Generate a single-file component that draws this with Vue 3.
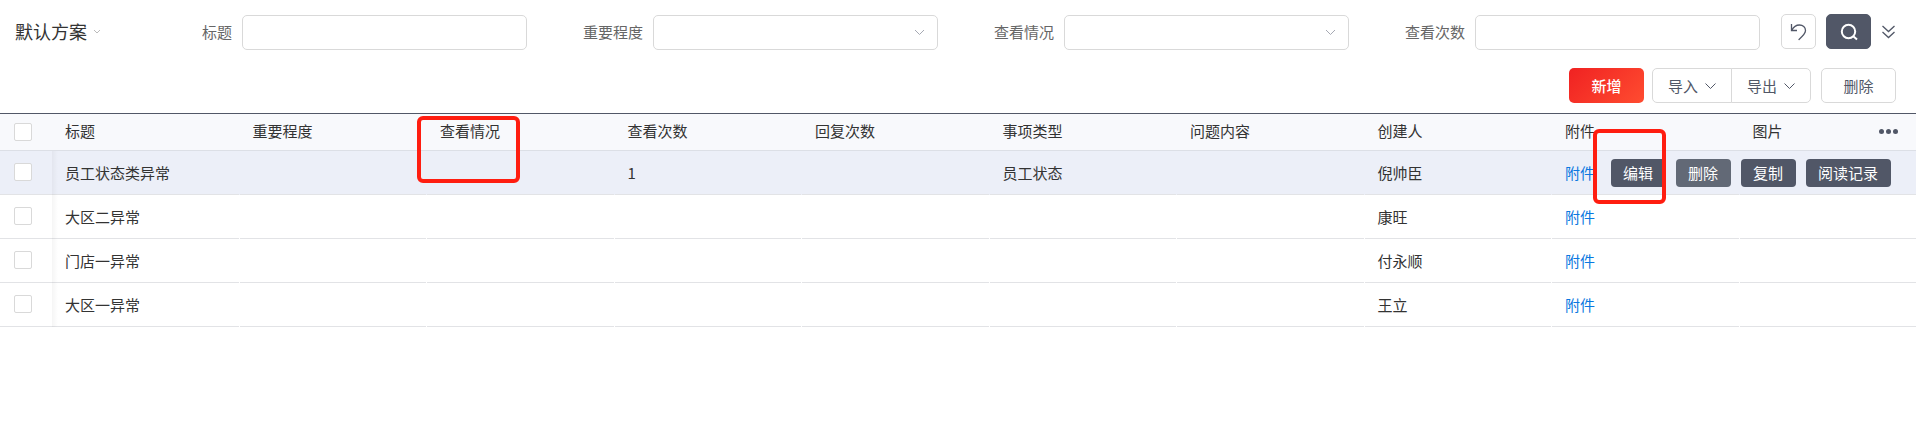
<script setup>
import { ref } from 'vue'

const filters = ref([
  { id: 'f-title', label: '标题', type: 'text', value: '' },
  { id: 'f-level', label: '重要程度', type: 'select', value: '' },
  { id: 'f-state', label: '查看情况', type: 'select', value: '' },
  { id: 'f-count', label: '查看次数', type: 'text', value: '' },
])

const columns = [
  { key: 'title', label: '标题' },
  { key: 'level', label: '重要程度' },
  { key: 'state', label: '查看情况', marked: true },
  { key: 'views', label: '查看次数' },
  { key: 'replies', label: '回复次数' },
  { key: 'kind', label: '事项类型' },
  { key: 'content', label: '问题内容' },
  { key: 'creator', label: '创建人' },
  { key: 'file', label: '附件' },
  { key: 'image', label: '图片' },
]

const rows = [
  { title: '员工状态类异常', views: '1', kind: '员工状态', creator: '倪帅臣', file: '附件', active: true },
  { title: '大区二异常', creator: '康旺', file: '附件' },
  { title: '门店一异常', creator: '付永顺', file: '附件' },
  { title: '大区一异常', creator: '王立', file: '附件' },
]
</script>

<template>
  <main class="page">
    <form class="filters" @submit.prevent>
      <button type="button" class="scheme">
        默认方案
        <svg width="8" height="6" viewBox="0 0 8 6"><path d="M1 1l3 3 3-3" /></svg>
      </button>
      <div v-for="f in filters" :key="f.id" class="field">
        <label :for="f.id">{{ f.label }}</label>
        <input v-if="f.type === 'text'" :id="f.id" v-model="f.value" type="text" class="control" />
        <div v-else class="select-wrap">
          <select :id="f.id" v-model="f.value" class="control"><option value=""></option></select>
          <svg width="11" height="7" viewBox="0 0 11 7"><path d="M1 1l4.5 4.5L10 1" /></svg>
        </div>
      </div>
      <div class="filter-actions">
        <button type="button" class="btn reset" aria-label="重置">
          <svg width="17" height="18" viewBox="0 0 17 18"><path d="M1.500 1v6.500h5.500M1.800 7.200C3.800 3.200 7 2 9.500 2c3.400 0 6 2.400 6 5.600 0 3.500-3.500 6.200-7 9.200" /></svg>
        </button>
        <button type="submit" class="btn search" aria-label="搜索">
          <svg width="18" height="18" viewBox="0 0 18 18"><circle cx="8.500" cy="8.500" r="6.700" /><path d="M13 13l4 3.500" /></svg>
        </button>
        <button type="button" class="more" aria-label="展开">
          <svg width="15" height="14" viewBox="0 0 15 14"><path d="M1.500 1l6 5.500 6-5.500M1.500 7l6 5.500 6-5.500" /></svg>
        </button>
      </div>
    </form>

    <div class="toolbar">
      <button type="button" class="btn primary">新增</button>
      <div class="group">
        <button type="button" class="btn">
          导入<svg width="11" height="8" viewBox="0 0 11 8"><path d="M.5 1.500l5 5 5-5" /></svg>
        </button>
        <button type="button" class="btn">
          导出<svg width="11" height="8" viewBox="0 0 11 8"><path d="M.5 1.500l5 5 5-5" /></svg>
        </button>
      </div>
      <button type="button" class="btn remove">删除</button>
    </div>

    <div class="table-wrap">
      <table>
        <thead>
          <tr>
            <th class="check"><input type="checkbox" aria-label="全选" /></th>
            <th v-for="c in columns" :key="c.key">
              {{ c.label }}
              <span v-if="c.marked" class="mark mark-column"></span>
            </th>
          </tr>
        </thead>
        <tbody>
          <tr v-for="r in rows" :key="r.title" :class="{ active: r.active }">
            <td class="check"><input type="checkbox" :aria-label="r.title" /></td>
            <td v-for="c in columns" :key="c.key">
              <a v-if="c.key === 'file'" href="#">{{ r.file }}</a>
              <template v-else>{{ r[c.key] }}</template>
            </td>
          </tr>
        </tbody>
      </table>
      <button type="button" class="dots" aria-label="列设置"><i></i><i></i><i></i></button>
      <div class="row-actions">
        <button type="button">编辑</button>
        <button type="button" class="hover">删除</button>
        <button type="button">复制</button>
        <button type="button">阅读记录</button>
        <span class="mark mark-edit"></span>
      </div>
    </div>
  </main>
</template>

<style>
body {
  margin: 0;
  background: #fff;
}
</style>

<style scoped>
.page,
.page button,
.page input,
.page select {
  font-family: "Noto Sans CJK SC", "Noto Sans", sans-serif;
  font-size: 15px;
  font-weight: 400;
  box-sizing: border-box;
}
.page {
  color: #333;
}
svg {
  display: block;
  fill: none;
  stroke: currentColor;
}
button {
  padding: 0;
  border: 0;
  background: none;
  white-space: nowrap;
}
.filters {
  display: flex;
  align-items: center;
  padding: 15px 20px 0 0;
}
.page .scheme {
  display: flex;
  align-items: center;
  gap: 6px;
  flex: 0 0 116px;
  padding: 0 0 2px 15px;
  font-size: 18px;
  line-height: 33px;
  color: #333;
}
.scheme svg {
  color: #bbb;
}
.field {
  display: flex;
  align-items: center;
  flex: 1;
}
.field label {
  flex: 0 0 126px;
  padding: 0 10px 2px 0;
  box-sizing: border-box;
  text-align: right;
  line-height: 33px;
  color: #666;
}
.control {
  display: block;
  width: 100%;
  min-width: 0;
  height: 35px;
  padding: 0 10px;
  border: 1px solid #d9d9d9;
  border-radius: 5px;
  background: #fff;
  color: #333;
  appearance: none;
}
.select-wrap {
  position: relative;
  flex: 1;
}
.select-wrap svg {
  position: absolute;
  right: 13px;
  top: 14px;
  color: #a6a9b3;
  pointer-events: none;
}
.filter-actions {
  display: flex;
  align-items: center;
  gap: 10px;
  margin: -2px 0 0 21px;
  color: #515767;
}
.btn {
  display: flex;
  align-items: center;
  justify-content: center;
  height: 35px;
  border: 1px solid #d9d9d9;
  border-radius: 5px;
  background: #fff;
  color: #515767;
}
.reset {
  width: 35px;
}
.reset svg {
  stroke-width: 1.3;
}
.search {
  width: 45px;
  border-color: #515767;
  background: #515767;
  color: #fff;
}
.search svg {
  stroke-width: 2;
}
.more {
  color: #515767;
}
.more svg {
  stroke-width: 1.3;
}
.toolbar {
  display: flex;
  justify-content: flex-end;
  padding: 18px 20px 10px;
}
.page .primary {
  width: 75px;
  border: 0;
  background: linear-gradient(135deg, #f02222, #ff4c30);
  color: #fff;
  font-weight: 500;
}
.group {
  display: flex;
  margin: 0 10px 0 8px;
}
.group .btn {
  width: 80px;
  gap: 7px;
}
.group .btn:first-child {
  border-radius: 5px 0 0 5px;
}
.group .btn:last-child {
  margin-left: -1px;
  border-radius: 0 5px 5px 0;
}
.remove {
  width: 75px;
}
.table-wrap {
  position: relative;
  overflow: hidden;
  border-top: 1px solid #515767;
}
table {
  width: calc(100% + 11px);
  table-layout: fixed;
  border-spacing: 0;
}
th,
td {
  height: 44px;
  padding: 0 0 0 13px;
  box-sizing: border-box;
  text-align: left;
  font-weight: 400;
  line-height: 22px;
  background: linear-gradient(#e2e3e6, #e2e3e6) left bottom / calc(100% - 1px) 1px no-repeat;
}
th {
  position: relative;
  height: 37px;
  padding-top: 0;
  padding-bottom: 2px;
  background: #f8f9fc;
  border-bottom: 1px solid #dcdfe6;
}
.check {
  position: relative;
  width: 52px;
  padding: 0 0 2px 14px;
  background-size: 100% 1px;
}
.check::after {
  content: "";
  position: absolute;
  top: 0;
  bottom: 0;
  left: 100%;
  width: 6px;
  background: linear-gradient(90deg, rgba(0, 0, 0, 0.04), rgba(0, 0, 0, 0));
}
.check input {
  display: block;
  width: 18px;
  height: 18px;
  margin: 0;
  border: 1px solid #d9d9d9;
  border-radius: 2px;
  background: #fff;
  appearance: none;
}
th.check {
  padding-bottom: 0;
}
.active td {
  background-color: #eceff8;
}
a {
  color: #0a78e0;
  text-decoration: none;
}
.dots {
  position: absolute;
  top: 15px;
  right: 18px;
  display: flex;
  gap: 2px;
}
.dots i {
  width: 5px;
  height: 5px;
  border-radius: 50%;
  background: #515767;
}
.row-actions {
  position: absolute;
  top: 45px;
  right: 25px;
  display: flex;
  gap: 10px;
}
.row-actions button {
  height: 28px;
  padding: 0 13px 2px 12px;
  border-radius: 4px;
  background: #515767;
  color: #fff;
}
.row-actions .hover {
  background: #626976;
}
.mark {
  position: absolute;
  z-index: 2;
  box-sizing: border-box;
  border: 4px solid #ff1d10;
  border-radius: 6px;
  pointer-events: none;
}
.mark-column {
  top: 2px;
  left: -10px;
  width: 103px;
  height: 67px;
}
.mark-edit {
  top: -30px;
  left: -18px;
  width: 73px;
  height: 75px;
}
</style>
